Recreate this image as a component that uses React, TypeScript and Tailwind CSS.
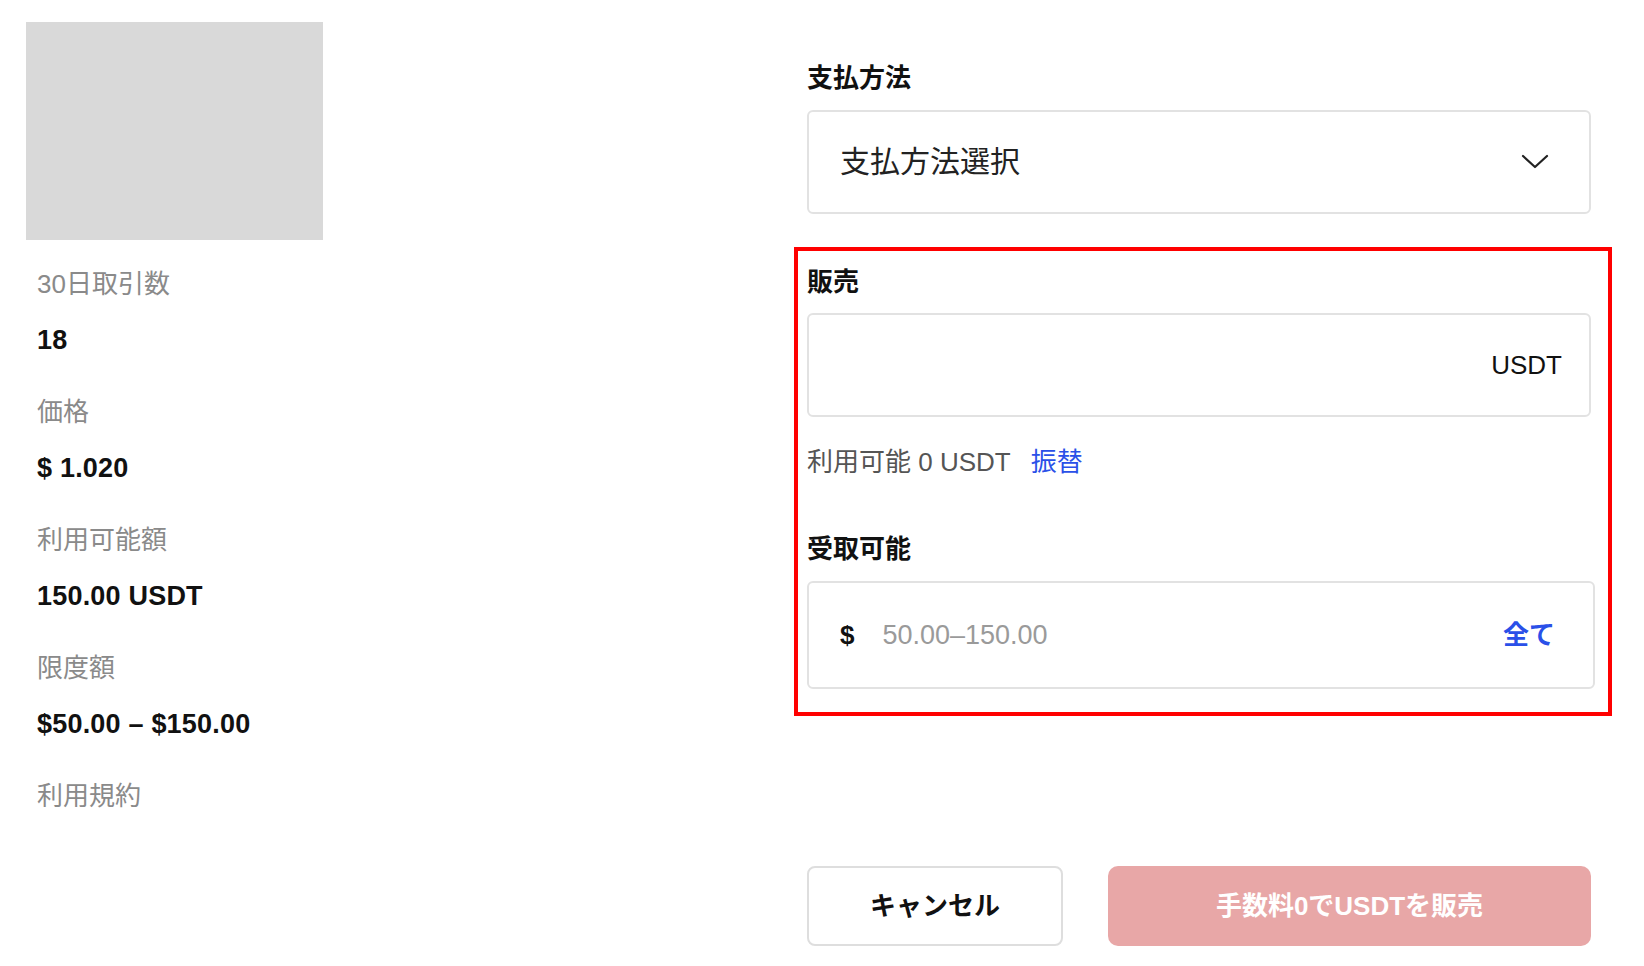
const font = {
  fontFamily: '"Liberation Sans", "Noto Sans CJK JP", sans-serif',
};

type Stat = { label: string; value?: string };

const stats: Stat[] = [
  { label: "30日取引数", value: "18" },
  { label: "価格", value: "$ 1.020" },
  { label: "利用可能額", value: "150.00 USDT" },
  { label: "限度額", value: "$50.00 – $150.00" },
  { label: "利用規約" },
];

function ChevronDown() {
  return (
    <svg width="28" height="16" viewBox="0 0 28 16" fill="none">
      <path
        d="M2 2 L14 13 L26 2"
        stroke="#222"
        strokeWidth="2.2"
        strokeLinecap="round"
        strokeLinejoin="round"
      />
    </svg>
  );
}

export default function App() {
  return (
    <div
      className="flex min-h-[966px] w-[1644px] bg-white pl-[26px] pt-[22px] text-[#111]"
      style={font}
    >
      {/* left: ad summary */}
      <div className="w-[297px]">
        <div className="h-[218px] w-[297px] bg-[#d9d9d9]" />
        <div className="mt-[28px] flex flex-col gap-[40px] pl-[11px]">
          {stats.map((s) => (
            <div key={s.label} className="flex flex-col gap-[24px]">
              <div className="text-[26px] leading-[32px] text-[#8a8a8a]">
                {s.label}
              </div>
              {s.value && (
                <div className="whitespace-nowrap text-[27px] font-bold leading-[32px] tracking-[0.2px] text-[#111]">
                  {s.value}
                </div>
              )}
            </div>
          ))}
        </div>
      </div>

      {/* right: order form */}
      <div className="ml-auto mr-[53px] w-[784px] pt-[40px]">
        <div className="text-[26px] font-bold leading-[32px]">支払方法</div>
        <button className="mt-[16px] flex h-[104px] w-full items-center justify-between rounded-[6px] border-2 border-[#e2e2e2] pl-[31px] pr-[40px] text-left">
          <span className="text-[30px] leading-[36px] text-[#222]">
            支払方法選択
          </span>
          <ChevronDown />
        </button>

        <div className="-ml-[13px] -mr-[21px] mt-[33px] border-4 border-[#ff0000] pb-[23px] pl-[9px] pr-[13px] pt-[15px]">
          <div className="text-[26px] font-bold leading-[32px]">販売</div>
          <div className="mt-[15px] mr-[4px] flex h-[104px] items-center justify-end rounded-[6px] border-2 border-[#e2e2e2] pr-[27px]">
            <span className="text-[26px] leading-[32px] text-[#111]">USDT</span>
          </div>
          <div className="mt-[29px] flex items-center text-[26px] leading-[32px] text-[#555]">
            <span className="whitespace-pre">利用可能 0 USDT</span>
            <span className="ml-[20px] text-[#2a50e8]">振替</span>
          </div>

          <div className="mt-[55px] text-[26px] font-bold leading-[32px]">
            受取可能
          </div>
          <div className="mt-[16px] flex h-[108px] items-center rounded-[6px] border-2 border-[#e2e2e2] pl-[31px] pr-[38px]">
            <span className="text-[26px] font-bold leading-[32px] text-[#111]">
              $
            </span>
            <span className="ml-[28px] flex-1 text-[27px] leading-[32px] text-[#9a9a9a]">
              50.00–150.00
            </span>
            <span className="text-[26px] font-bold leading-[32px] text-[#2a50e8]">
              全て
            </span>
          </div>
        </div>

        <div className="mt-[150px] flex gap-[45px]">
          <button className="flex h-[80px] w-[256px] items-center justify-center rounded-[8px] border-2 border-[#dedede] bg-white text-[26px] font-bold text-[#111]">
            キャンセル
          </button>
          <button className="flex h-[80px] flex-1 items-center justify-center rounded-[10px] bg-[#e8a7a7] text-[26px] font-bold text-white">
            手数料0でUSDTを販売
          </button>
        </div>
      </div>
    </div>
  );
}
